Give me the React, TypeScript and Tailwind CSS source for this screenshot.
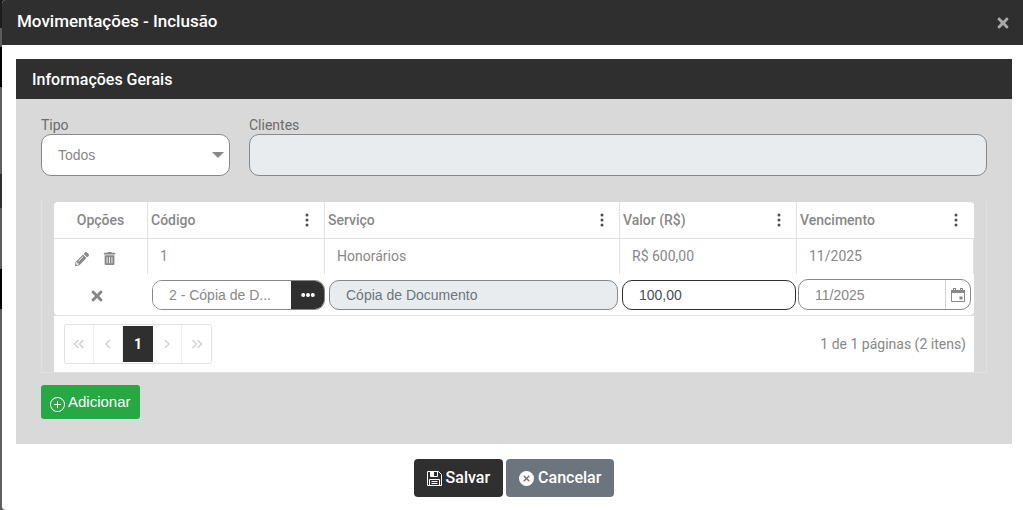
import { useState } from "react";
import type { ReactNode } from "react";
import { FaPencilAlt, FaTimes, FaTrashAlt } from "react-icons/fa";
import { BsPlusCircle, BsThreeDotsVertical } from "react-icons/bs";

const field =
  "block w-full rounded-[10px] border border-[#888] px-4 font-['Liberation_Sans',sans-serif] text-sm outline-none";

function FloppyIcon() {
  return (
    <svg viewBox="0 0 15 15" className="size-[15px]" fill="none" stroke="currentColor" aria-hidden="true">
      <path d="M.5 .5h11l3 3v11H.5z" />
      <path d="M3.500 .5v5h7v-5" />
      <path d="M4 1h3v4H4z" fill="currentColor" stroke="none" />
      <path d="M2.500 14.500v-6h10v6M4.500 10.500h6M4.500 12.500h6" />
    </svg>
  );
}

function CancelIcon() {
  return (
    <svg viewBox="0 0 15 15" className="size-[15px]" aria-hidden="true">
      <circle cx="7.5" cy="7.500" r="7.500" fill="currentColor" />
      <path d="M4.700 4.700l5.600 5.600M10.300 4.700l-5.600 5.600" stroke="#6c757d" strokeWidth="1.400" />
    </svg>
  );
}

function CalendarIcon() {
  return (
    <svg viewBox="0 0 14 14" className="size-3.5" fill="none" stroke="currentColor" aria-hidden="true">
      <path d="M.5 2.500h13v11H.5z" />
      <path d="M0 2h14v3H0zM2 0h3v2H2zM9 0h3v2H9z" fill="currentColor" stroke="none" />
      <path d="M3 1.500h1M10 1.500h1" stroke="#fff" />
      <path d="M8.500 8.500h3v3h-3z" fill="currentColor" stroke="none" />
    </svg>
  );
}

function DotsIcon() {
  return (
    <svg viewBox="0 0 14 4" className="h-1 w-3.5" fill="currentColor" aria-hidden="true">
      <circle cx="2.200" cy="2" r="2" />
      <circle cx="7" cy="2" r="2" />
      <circle cx="11.800" cy="2" r="2" />
    </svg>
  );
}

function Chevrons({ double, flip }: { double?: boolean; flip?: boolean }) {
  return (
    <svg
      viewBox="0 0 12 10"
      className={flip ? "h-2.5 w-3 rotate-180" : "h-2.5 w-3"}
      fill="none"
      stroke="currentColor"
      strokeWidth="1.4"
      aria-hidden="true"
    >
      {double ? <path d="M5.500 1l-4 4 4 4M10.500 1l-4 4 4 4" /> : <path d="M8 1L4 5l4 4" />}
    </svg>
  );
}

function HeaderCell({ children, last }: { children: ReactNode; last?: boolean }) {
  return (
    <th className={last ? "pr-2.5 pl-[3px]" : "border-r border-[#dee2e6] pr-[9px] pl-[3px]"}>
      <div className="flex items-center justify-between">
        <span className="font-medium">{children}</span>
        <button type="button" aria-label="Menu da coluna" className="text-[#495057]">
          <BsThreeDotsVertical className="size-4" />
        </button>
      </div>
    </th>
  );
}

function PagerButton({ label, children, last }: { label: string; children: ReactNode; last?: boolean }) {
  return (
    <button
      type="button"
      aria-label={label}
      className={
        last
          ? "flex w-[29px] items-center justify-center"
          : "flex w-[29px] items-center justify-center border-r border-[#eceef0]"
      }
    >
      {children}
    </button>
  );
}

export default function App() {
  const [tipo, setTipo] = useState("Todos");
  const [valor, setValor] = useState("100,00");
  const [vencimento, setVencimento] = useState("11/2025");

  return (
    <div className="flex min-h-screen bg-[#5c5c5c] bg-[linear-gradient(#1c1c1c_0_28px,#5c5c5c_28px_47px,#000_47px_87px,#606060_87px_174px,#303030_174px_208px,#5c5c5c_208px_269px,#000_269px_309px,#606060_309px)] pl-0.5 font-[Roboto,sans-serif] text-sm text-[#888]">
      <div role="dialog" aria-labelledby="titulo" className="flex flex-1 flex-col rounded-l bg-white">
        <header className="flex h-[45px] items-center justify-between rounded-tl bg-[#2f2f2f] pr-3 pb-0.5 pl-[15px]">
          <h1 id="titulo" className="text-[17px] font-medium text-white">
            Movimentações - Inclusão
          </h1>
          <button type="button" aria-label="Fechar" className="pt-0.5 text-[#aaa]">
            <FaTimes className="size-4" />
          </button>
        </header>

        <main className="pt-3.5 pr-[11px] pl-3.5">
          <section className="bg-[#d9d9d9]">
            <h2 className="flex h-10 items-center bg-[#2f2f2f] px-4 pt-0.5 text-base font-medium text-white">
              Informações Gerais
            </h2>

            <div className="px-[25px] pt-[17px] pb-[25px]">
              <div className="flex gap-[19px]">
                <div className="w-[189px]">
                  <label htmlFor="tipo" className="block h-[18px] leading-[18px] text-[#6c6c6c]">
                    Tipo
                  </label>
                  <div className="relative">
                    <select
                      id="tipo"
                      value={tipo}
                      onChange={(e) => setTipo(e.target.value)}
                      className={`${field} h-[42px] appearance-none bg-white`}
                    >
                      <option>Todos</option>
                    </select>
                    <span className="pointer-events-none absolute top-[18px] right-1.5 border-x-[6px] border-t-[6px] border-x-transparent border-t-[#888]" />
                  </div>
                </div>
                <div className="flex-1">
                  <label htmlFor="clientes" className="block h-[18px] leading-[18px] text-[#6c6c6c]">
                    Clientes
                  </label>
                  <input id="clientes" readOnly className={`${field} h-[42px] bg-[#e9ecef]`} />
                </div>
              </div>

              <div className="mt-[25px] border-x border-b border-[#dee2e6] px-3 pt-px">
                <div className="overflow-hidden rounded-[4px] bg-white">
                  <table className="w-full table-fixed border-separate border-spacing-0 text-left">
                    <colgroup>
                      <col className="w-[94px]" />
                      <col className="w-[177px]" />
                      <col />
                      <col className="w-[177px]" />
                      <col className="w-[177px]" />
                    </colgroup>
                    <thead>
                      <tr className="h-[37px] *:border-b *:border-b-[#dee2e6]">
                        <th className="border-r border-[#dee2e6] text-center font-medium">Opções</th>
                        <HeaderCell>Código</HeaderCell>
                        <HeaderCell>Serviço</HeaderCell>
                        <HeaderCell>Valor (R$)</HeaderCell>
                        <HeaderCell last>Vencimento</HeaderCell>
                      </tr>
                    </thead>
                    <tbody>
                      <tr className="h-[35px] *:border-r *:border-[#dee2e6] *:pb-0.5">
                        <td>
                          <div className="flex items-center gap-3.5 pt-1.5 pl-[21px]">
                            <button type="button" aria-label="Editar">
                              <FaPencilAlt className="size-3.5" />
                            </button>
                            <button type="button" aria-label="Excluir">
                              <FaTrashAlt className="size-[13px]" />
                            </button>
                          </div>
                        </td>
                        <td className="pl-3">1</td>
                        <td className="pl-3">Honorários</td>
                        <td className="pl-3">R$ 600,00</td>
                        <td className="pl-3">11/2025</td>
                      </tr>
                      <tr className="h-[41px]">
                        <td>
                          <div className="flex justify-center pt-0.5 pr-2">
                            <button type="button" aria-label="Remover">
                              <FaTimes className="size-4" />
                            </button>
                          </div>
                        </td>
                        <td className="pl-1">
                          <div className="flex h-[30px] overflow-hidden rounded-[10px] border border-[#888]">
                            <input
                              aria-label="Código"
                              readOnly
                              value="2 - Cópia de D..."
                              className="w-0 flex-1 bg-white pl-4 font-['Liberation_Sans',sans-serif] text-sm outline-none"
                            />
                            <button
                              type="button"
                              aria-label="Pesquisar código"
                              className="-my-px -mr-px flex w-[34px] items-center justify-center bg-[#2f2f2f] text-white"
                            >
                              <DotsIcon />
                            </button>
                          </div>
                        </td>
                        <td className="pr-0.5 pl-1">
                          <input
                            aria-label="Serviço"
                            readOnly
                            value="Cópia de Documento"
                            className={`${field} h-[30px] bg-[#e9ecef] text-[#6c757d]`}
                          />
                        </td>
                        <td className="pr-px pl-0.5">
                          <input
                            aria-label="Valor"
                            value={valor}
                            onChange={(e) => setValor(e.target.value)}
                            className="block h-[30px] w-full rounded-[10px] border border-[#2f2f2f] bg-white px-4 font-['Liberation_Sans',sans-serif] text-sm text-[#495057] outline-none"
                          />
                        </td>
                        <td className="pr-[3px] pl-px">
                          <div className="flex h-[31px] rounded-[10px] border border-[#888]">
                            <input
                              aria-label="Vencimento"
                              value={vencimento}
                              onChange={(e) => setVencimento(e.target.value)}
                              className="w-0 flex-1 bg-transparent pl-4 font-['Liberation_Sans',sans-serif] text-sm outline-none"
                            />
                            <button
                              type="button"
                              aria-label="Abrir calendário"
                              className="flex w-[25px] items-center justify-center border-l border-[#ced4da]"
                            >
                              <CalendarIcon />
                            </button>
                          </div>
                        </td>
                      </tr>
                    </tbody>
                  </table>
                </div>

                <div className="flex h-[57px] items-center justify-between border-t border-[#dee2e6] bg-white pr-2 pl-2.5">
                  <nav
                    aria-label="Paginação"
                    className="flex h-10 w-[148px] rounded-[3px] border border-[#dee2e6] text-[#ced0d2]"
                  >
                    <PagerButton label="Primeira página">
                      <Chevrons double />
                    </PagerButton>
                    <PagerButton label="Página anterior">
                      <Chevrons />
                    </PagerButton>
                    <button
                      type="button"
                      aria-current="page"
                      className="my-px w-[30px] bg-[#2f2f2f] font-bold text-white"
                    >
                      1
                    </button>
                    <PagerButton label="Próxima página">
                      <Chevrons flip />
                    </PagerButton>
                    <PagerButton label="Última página" last>
                      <Chevrons double flip />
                    </PagerButton>
                  </nav>
                  <span>1 de 1 páginas (2 itens)</span>
                </div>
              </div>

              <button
                type="button"
                className="mt-3 flex h-[34px] items-center gap-[3px] rounded-[3px] bg-[#28a745] px-[9px] font-['Liberation_Sans',sans-serif] text-[15px] text-white"
              >
                <BsPlusCircle className="mt-1 size-[15px]" />
                Adicionar
              </button>
            </div>
          </section>
        </main>

        <footer className="flex justify-center gap-[3px] pt-[15px] pl-[3px] pb-[13px] text-base font-medium text-white">
          <button type="button" className="flex h-[38px] items-center gap-1 rounded bg-[#2f2f2f] px-[13px]">
            <FloppyIcon />
            Salvar
          </button>
          <button type="button" className="flex h-[38px] items-center gap-1 rounded bg-[#6c757d] px-[13px]">
            <CancelIcon />
            Cancelar
          </button>
        </footer>
      </div>
    </div>
  );
}
